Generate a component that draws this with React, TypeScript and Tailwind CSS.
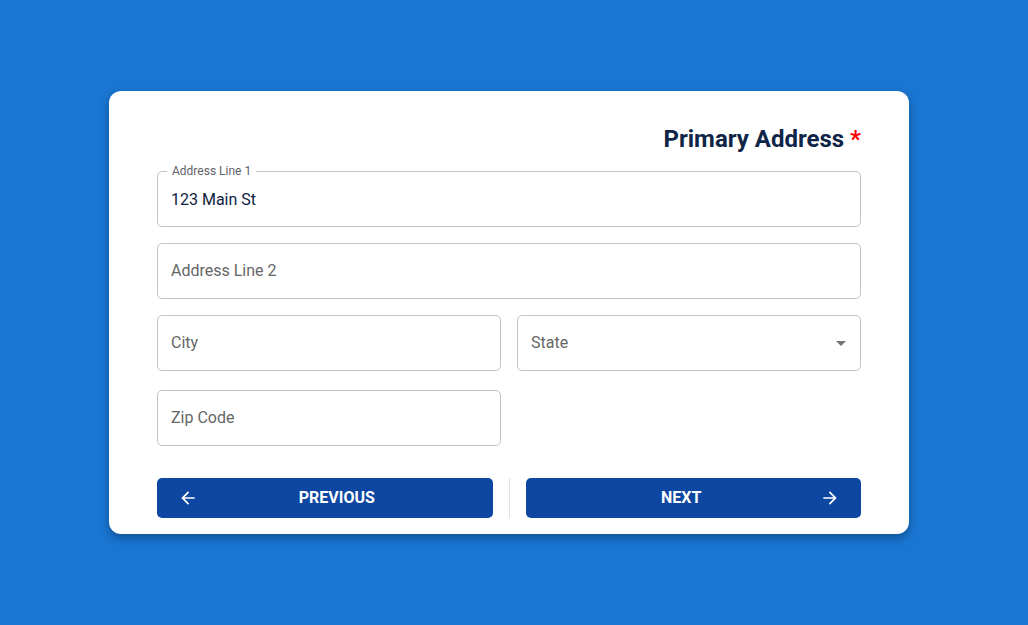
import React from "react";

const font = { fontFamily: "Roboto, 'Noto Sans', sans-serif" };

function Field({ label, value, floating, className = "" }: { label: string; value?: string; floating?: boolean; className?: string }) {
  return (
    <div className={`relative h-[56px] rounded-[5px] border border-[#c4c4c4] bg-white ${className}`}>
      {floating && (
        <span className="absolute left-[9px] top-[-8px] bg-white px-[5px] text-[12px] leading-[14px] text-[#5f6368]">
          {label}
        </span>
      )}
      <div className={`flex h-full items-center px-[13px] text-[16px] ${floating ? "pt-[1px]" : ""}`}>
        {floating ? (
          <span className="text-[#10213f]">{value}</span>
        ) : (
          <span className="text-[#666666]">{label}</span>
        )}
      </div>
    </div>
  );
}

export default function App() {
  return (
    <div style={font} className="flex min-h-[625px] w-full items-start justify-center bg-[#1976d2] pt-[91px] pr-[10px]">
      <div className="w-[800px] rounded-[12px] bg-white px-[48px] pt-[32px] pb-[16px] shadow-[0_4px_10px_rgba(0,0,0,0.3)]">
        <h2 className="text-right text-[24px] font-bold leading-[32px] text-[#0f2547]">
          Primary Address <span className="text-[#ff0000]">*</span>
        </h2>
        <div className="mt-[16px] flex flex-col gap-[16px]">
          <Field label="Address Line 1" value="123 Main St" floating />
          <Field label="Address Line 2" />
          <div className="grid grid-cols-2 gap-[16px]">
            <Field label="City" />
            <div className="relative flex h-[56px] items-center justify-between rounded-[5px] border border-[#c4c4c4] px-[13px] text-[16px] text-[#666666]">
              <span>State</span>
              <svg width="24" height="24" viewBox="0 0 24 24" className="mr-[-6px]">
                <path d="M7 10l5 5 5-5z" fill="#757575" />
              </svg>
            </div>
          </div>
        </div>
        <div className="mt-[19px] grid grid-cols-2 gap-[16px]">
          <Field label="Zip Code" />
          <div />
        </div>
        <div className="mt-[32px] flex items-stretch">
          <button className="relative flex h-[40px] flex-1 items-center justify-center rounded-[5px] bg-[#0d47a1] pl-[24px] text-[16px] font-bold uppercase text-white">
            <svg width="20" height="20" viewBox="0 0 24 24" className="absolute left-[21px] top-[10px]">
              <path d="M20 11H7.83l5.59-5.59L12 4l-8 8 8 8 1.41-1.41L7.83 13H20v-2z" fill="white" />
            </svg>
            Previous
          </button>
          <div className="mx-[16px] w-px bg-[#e0e0e0]" />
          <button className="relative flex h-[40px] flex-1 items-center justify-center rounded-[5px] bg-[#0d47a1] pr-[24px] text-[16px] font-bold uppercase text-white">
            Next
            <svg width="20" height="20" viewBox="0 0 24 24" className="absolute right-[21px] top-[10px]">
              <path d="M12 4l-1.41 1.41L16.17 11H4v2h12.17l-5.58 5.59L12 20l8-8z" fill="white" />
            </svg>
          </button>
        </div>
      </div>
    </div>
  );
}
